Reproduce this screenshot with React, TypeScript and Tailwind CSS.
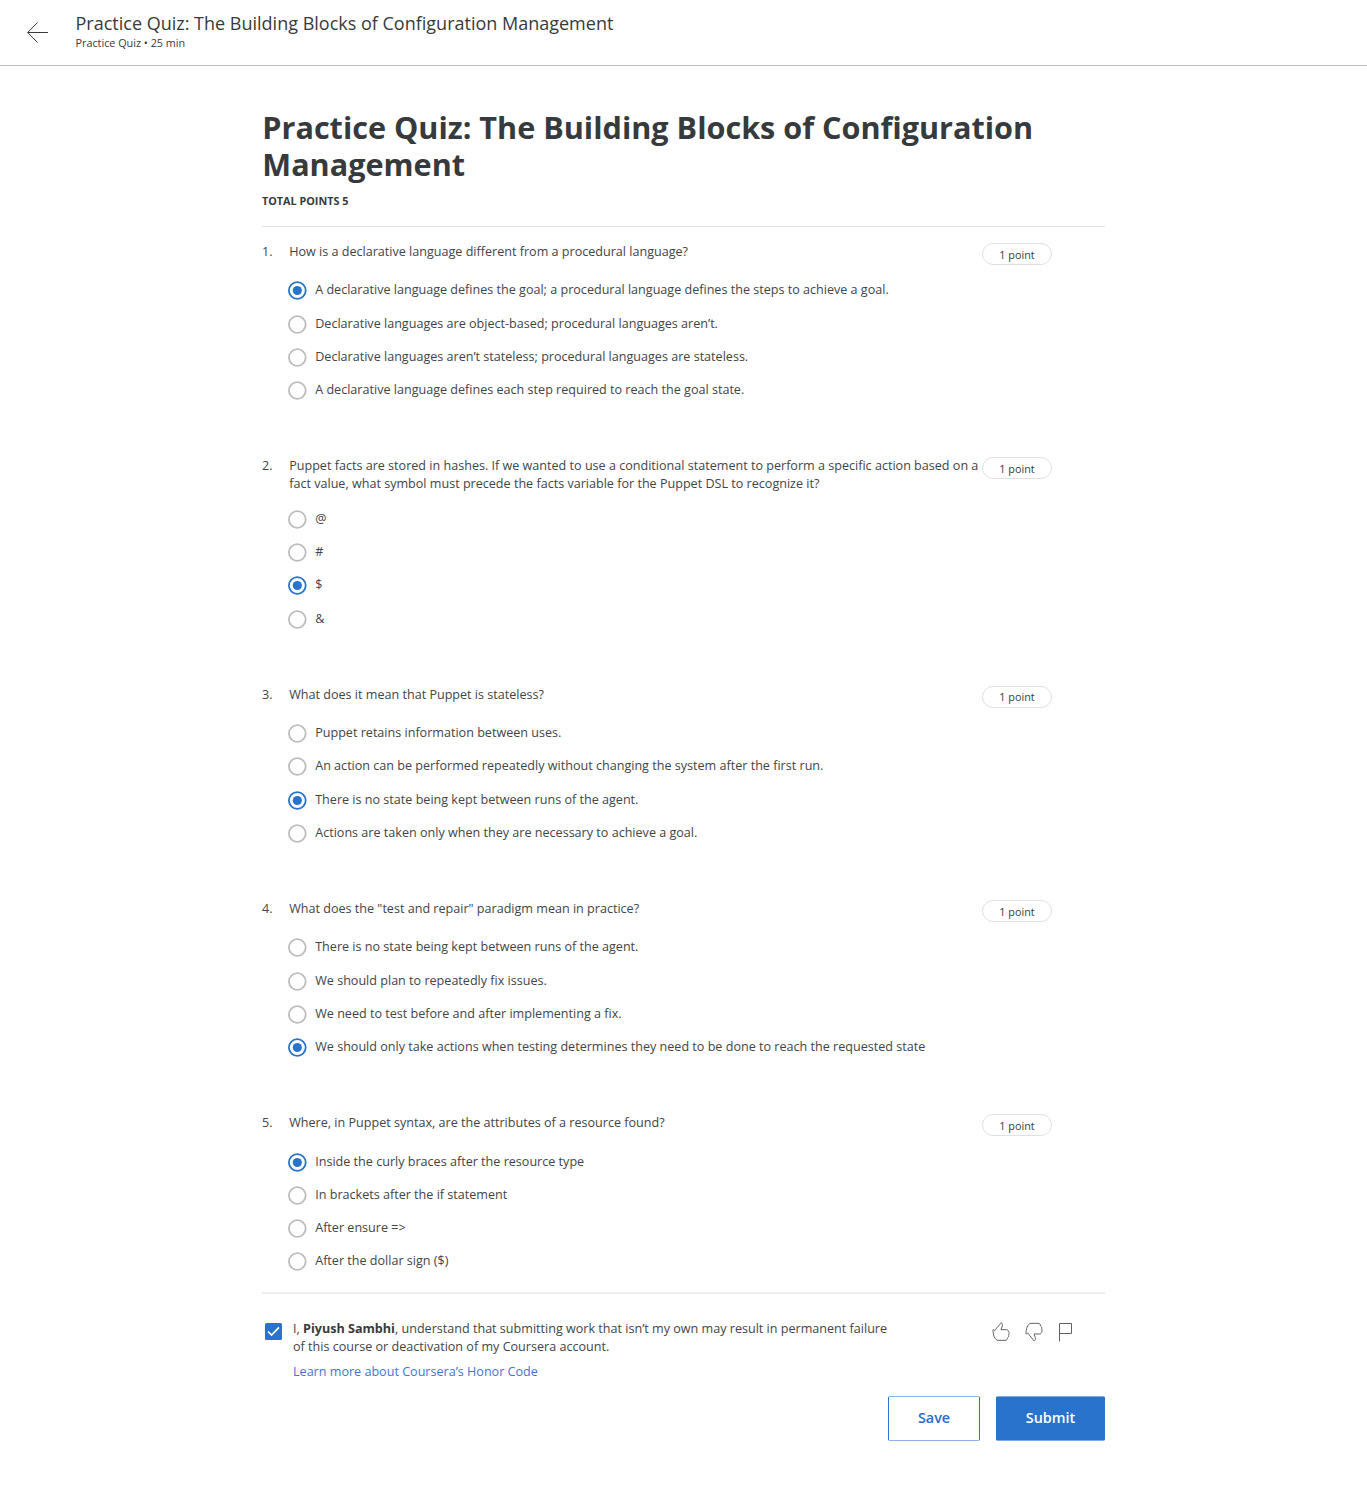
import React from 'react';

type Question = { text: string; options: string[]; selected: number };

const questions: Question[] = [
  {
    text: 'How is a declarative language different from a procedural language?',
    options: [
      'A declarative language defines the goal; a procedural language defines the steps to achieve a goal.',
      'Declarative languages are object-based; procedural languages aren’t.',
      'Declarative languages aren’t stateless; procedural languages are stateless.',
      'A declarative language defines each step required to reach the goal state.',
    ],
    selected: 0,
  },
  {
    text: 'Puppet facts are stored in hashes. If we wanted to use a conditional statement to perform a specific action based on a fact value, what symbol must precede the facts variable for the Puppet DSL to recognize it?',
    options: ['@', '#', '$', '&'],
    selected: 2,
  },
  {
    text: 'What does it mean that Puppet is stateless?',
    options: [
      'Puppet retains information between uses.',
      'An action can be performed repeatedly without changing the system after the first run.',
      'There is no state being kept between runs of the agent.',
      'Actions are taken only when they are necessary to achieve a goal.',
    ],
    selected: 2,
  },
  {
    text: 'What does the "test and repair" paradigm mean in practice?',
    options: [
      'There is no state being kept between runs of the agent.',
      'We should plan to repeatedly fix issues.',
      'We need to test before and after implementing a fix.',
      'We should only take actions when testing determines they need to be done to reach the requested state',
    ],
    selected: 3,
  },
  {
    text: 'Where, in Puppet syntax, are the attributes of a resource found?',
    options: [
      'Inside the curly braces after the resource type',
      'In brackets after the if statement',
      'After ensure =>',
      'After the dollar sign ($)',
    ],
    selected: 0,
  },
];

function Radio({ checked }: { checked: boolean }) {
  return (
    <svg className="size-5 shrink-0" viewBox="0 0 20 20" fill="none">
      <circle cx="10.3" cy="9.5" r="8.4" stroke={checked ? '#2a73cc' : '#bdbdbd'} strokeWidth="1.8" />
      {checked && <circle cx="10.3" cy="9.5" r="4.6" fill="#2a73cc" />}
    </svg>
  );
}

function QuestionBlock({ question, index }: { question: Question; index: number }) {
  return (
    <section>
      <div className="flex h-fit items-start">
        <span className="w-[27.2px] shrink-0 pt-[0.3px]">{index + 1}.</span>
        <div className={index === 1 ? 'h-[36px] w-[692.8px] pt-[0.3px]' : 'h-[21px] w-[692.8px] pt-[0.3px]'}>
          <p>{question.text}</p>
        </div>
        <span className="mt-[0.5px] flex h-[22px] w-[70px] shrink-0 items-center justify-center rounded-full border border-[#e1e1e1] pt-[1px] text-[10.8px] whitespace-nowrap text-[#373a3c]">
          1 point
        </span>
      </div>
      <div className={index === 1 ? 'pt-[10.37px]' : 'pt-[9.57px]'}>
        {question.options.map((option, i) => (
          <label key={i} className="flex h-[33.3px] items-center gap-[8.2px] pl-[25px]">
            <Radio checked={i === question.selected} />
            <span className="-mt-[2px]">{option}</span>
          </label>
        ))}
      </div>
    </section>
  );
}

const thumbPath =
  'M3 23C3 30 4 38 6 43C8 49 13 55 18 55H39C44 55 47 51 47 47C50 45 51 41 50 38C52 34 51 30 50 28C48 24 46 23 43 23H27L31 12C32 7 31 4 28 3C25 3 24 5 23 8L15 17C12 20 12 24 9 25C7 26 5 23 3 23Z';

export default function App() {
  return (
    <div className="min-h-[1498px] bg-white font-['Open_Sans',sans-serif] text-[12.59px] leading-[18px] text-[#424547]">
      <header className="flex h-[66px] items-start border-b border-[#bdbdbd] pl-[26px]">
        <svg className="mt-[21px] h-[23px] w-[24px]" viewBox="0 0 24 23" fill="none" stroke="#373a3c">
          <path d="M11.5 1.5L1.7 11.5L11.5 21.5M1.7 11.5H22" />
        </svg>
        <div className="ml-[25.5px] pt-[12px] text-[#373a3c]">
          <div className="text-[18px] leading-[22px]">Practice Quiz: The Building Blocks of Configuration Management</div>
          <div className="text-[10.8px] leading-[18px]">Practice Quiz • 25 min</div>
        </div>
      </header>
      <main className="ml-[262px] w-[843px]">
        <h1 className="pt-[43px] pl-[0.3px] text-[30.6px] leading-[37px] font-bold text-[#373a3c]">
          Practice Quiz: The Building Blocks of Configuration Management
        </h1>
        <div className="pt-[9px] text-[10.8px] leading-[18px] font-bold text-[#373a3c]">TOTAL POINTS 5</div>
        <div className="mt-[16px] border-b border-[#e1e1e1]" />
        <div className="flex flex-col gap-[49.03px] pt-[15.5px]">
          {questions.map((question, i) => (
            <QuestionBlock key={i} question={question} index={i} />
          ))}
        </div>
        <div className="mt-[12.9px] h-[2px] bg-[#eeeeee]" />
        <div className="flex items-start pt-[26px]">
          <span className="mt-[3px] ml-[2.5px] flex size-[17px] shrink-0 items-center justify-center rounded-[1.5px] bg-[#2a73cc]">
            <svg className="size-[17px]" viewBox="0 0 17 17" fill="none" stroke="#fff" strokeWidth="1.7">
              <path d="M3 8.5L6.6 12L14 4.4" />
            </svg>
          </span>
          <div className="ml-[11.5px] w-[600px] shrink-0">
            <p>
              I, <strong className="font-bold text-[#373a3c]">Piyush Sambhi</strong>, understand that submitting work that isn’t my own may result in permanent failure of this course or deactivation of my Coursera account.
            </p>
            <a className="mt-[7px] block text-[#4274d3]">Learn more about Coursera’s Honor Code</a>
          </div>
          <div className="mt-[2px] ml-[99px] flex gap-[15px] text-[#5f6264]">
            <svg className="h-[20px] w-[18px]" viewBox="0 0 54 60" fill="none" stroke="currentColor" strokeWidth="3">
              <path d={thumbPath} />
            </svg>
            <svg className="h-[20px] w-[18px] rotate-180 -scale-x-100" viewBox="0 0 54 60" fill="none" stroke="currentColor" strokeWidth="3">
              <path d={thumbPath} transform="translate(0 1)" />
            </svg>
            <svg className="h-[20px] w-[16px]" viewBox="0 0 16 20" fill="none" stroke="currentColor" strokeWidth="1">
              <path d="M1.5 19.5V1.5H13.5V11.5H1.5" />
            </svg>
          </div>
        </div>
        <div className="flex justify-end gap-[16px] pt-[15px] text-[14.4px] font-semibold">
          <button className="h-[45px] w-[92px] rounded-[2px] border border-x-[#2a73cc] border-y-[#8fb3e8] pb-[1px] text-[#2a6bc8]">Save</button>
          <button className="h-[45px] w-[109px] rounded-[2px] border border-x-[#2a73cc] border-y-[#7ba9e2] bg-[#2a73cc] pb-[1px] text-white">Submit</button>
        </div>
      </main>
    </div>
  );
}
